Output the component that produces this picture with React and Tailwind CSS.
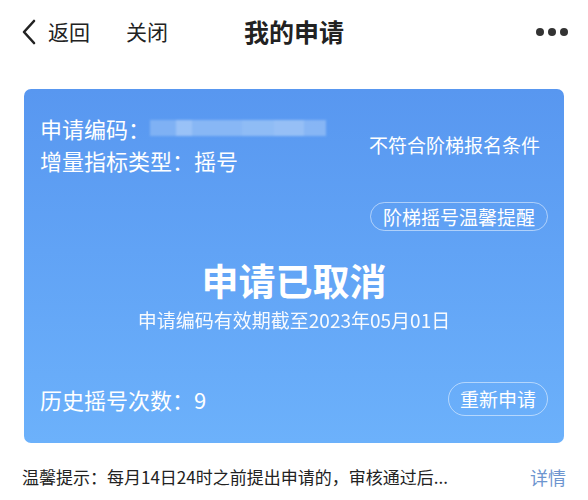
export default function App() {
  return (
    <div
      className="w-[588px] h-[500px] bg-white overflow-hidden text-[#222]"
      style={{ fontFamily: '"Noto Sans CJK SC", "Noto Sans", sans-serif' }}
    >
      {/* top bar */}
      <div className="relative h-[64px] flex items-center px-[20px]">
        <svg width="18" height="28" viewBox="0 0 18 28" className="mr-[10px]">
          <path d="M14 3 L4 14 L14 25" fill="none" stroke="#222" strokeWidth="2.6" strokeLinecap="round" strokeLinejoin="round" />
        </svg>
        <span className="text-[21px]">返回</span>
        <span className="text-[21px] ml-[36px]">关闭</span>
        <span className="absolute left-0 right-0 text-center text-[25px] font-bold pointer-events-none">我的申请</span>
        <div className="ml-auto flex gap-[4px]">
          <span className="w-[8px] h-[8px] rounded-full bg-[#333]" />
          <span className="w-[8px] h-[8px] rounded-full bg-[#333]" />
          <span className="w-[8px] h-[8px] rounded-full bg-[#333]" />
        </div>
      </div>

      {/* application card */}
      <div className="mx-[24px] mt-[25px] h-[354px] rounded-[7px] bg-gradient-to-b from-[#5897f0] to-[#6cb1fb] text-white px-[16px] pt-[24px] flex flex-col">
        <div className="flex justify-between">
          <div className="flex flex-col gap-[2px]">
            <div className="flex items-center text-[22px] leading-[30px]">
              <span>申请编码：</span>
              <span className="ml-[0px] flex h-[16px] opacity-70 blur-[1px]">
                <span className="w-[26px] bg-[#8fbcf6]" />
                <span className="w-[16px] bg-[#b5d3fa]" />
                <span className="w-[50px] bg-[#9cc4f7]" />
                <span className="w-[32px] bg-[#a6cbf8]" />
                <span className="w-[30px] bg-[#b0d0f9]" />
                <span className="w-[22px] bg-[#9ac2f7]" />
              </span>
            </div>
            <div className="text-[22px] leading-[30px]">增量指标类型：摇号</div>
          </div>
          <div className="text-[19px] leading-[26px] mt-[19px] mr-[8px]">不符合阶梯报名条件</div>
        </div>

        <div className="flex justify-end mt-[27px]">
          <span className="h-[29px] px-[12px] rounded-full border border-white/50 text-[19px] leading-[27px]">阶梯摇号温馨提醒</span>
        </div>

        <div className="text-center text-[37px] font-bold leading-[48px] mt-[25px]">申请已取消</div>
        <div className="text-center text-[19px] leading-[24px] mt-[4px] opacity-95">申请编码有效期截至2023年05月01日</div>

        <div className="flex items-center justify-between mt-[50px]">
          <span className="text-[22px] leading-[30px]">历史摇号次数：9</span>
          <span className="h-[34px] px-[11px] rounded-full border border-white/50 text-[19px] leading-[32px]">重新申请</span>
        </div>
      </div>

      {/* notice line */}
      <div className="flex items-center px-[22px] mt-[22px] text-[17px] leading-[24px]">
        <span className="text-[#222]">温馨提示：每月14日24时之前提出申请的，审核通过后...</span>
        <span className="ml-auto text-[#6d95cf] text-[18px]">详情</span>
      </div>
    </div>
  );
}
